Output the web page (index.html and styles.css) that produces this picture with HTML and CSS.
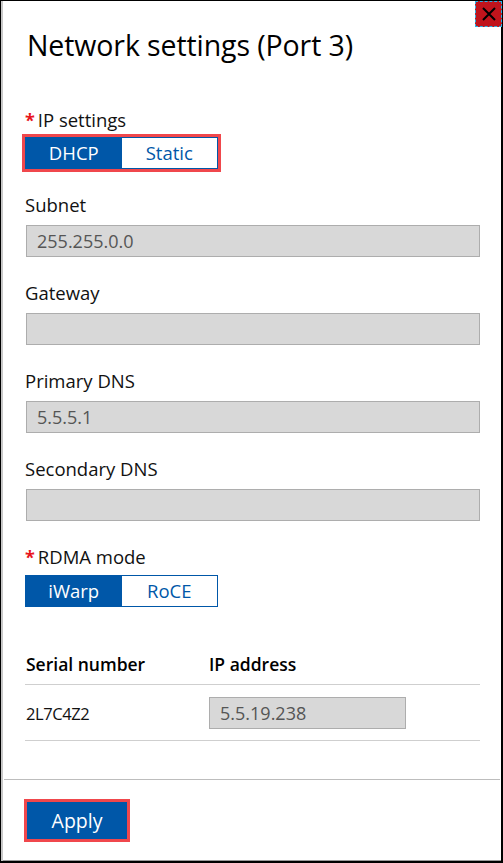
FILE: index.html
```html
<!DOCTYPE html>
<html lang="en">
<head>
<meta charset="utf-8">
<title>Network settings (Port 3)</title>
<link rel="stylesheet" href="styles.css">
</head>
<body>
<div class="window">
  <button class="close" aria-label="Close">
    <svg width="14" height="14" viewBox="0 0 14 14"><path d="M1 1 L13 13 M13 1 L1 13" stroke="#000" stroke-width="2" fill="none"/></svg>
  </button>
  <div class="content">
    <h1 class="title">Network settings (Port 3)</h1>

    <div class="label label-first"><span class="req">*</span>IP settings</div>
    <div class="seg seg-hl">
      <span class="seg-btn on">DHCP</span><span class="seg-btn">Static</span>
    </div>

    <div class="label">Subnet</div>
    <div class="input">255.255.0.0</div>

    <div class="label">Gateway</div>
    <div class="input"></div>

    <div class="label">Primary DNS</div>
    <div class="input">5.5.5.1</div>

    <div class="label">Secondary DNS</div>
    <div class="input"></div>

    <div class="label"><span class="req">*</span>RDMA mode</div>
    <div class="seg">
      <span class="seg-btn on">iWarp</span><span class="seg-btn">RoCE</span>
    </div>

    <div class="table">
      <div class="trow thead">
        <div class="c1">Serial number</div>
        <div class="c2">IP address</div>
      </div>
      <div class="trow tbody">
        <div class="c1 serial">2L7C4Z2</div>
        <div class="c2"><div class="input small">5.5.19.238</div></div>
      </div>
    </div>
  </div>
  <div class="footer">
    <button class="apply">Apply</button>
  </div>
</div>
</body>
</html>
```
FILE: styles.css
```css
* { box-sizing: border-box; }
html, body { margin: 0; padding: 0; background: #fff; }
body {
  font-family: "Open Sans", "Noto Sans", sans-serif;
  color: #111;
}
.window {
  position: relative;
  width: 503px;
  height: 863px;
  border-top: 1px solid #000;
  border-left: 1px solid #000;
  border-right: 2px solid #000;
  border-bottom: 2px solid #000;
  box-shadow: inset 2px 0 0 #c8c8c8, inset 0 -1px 0 #9a9a9a;
  display: flex;
  flex-direction: column;
}
.close {
  position: absolute;
  top: 0;
  right: -1px;
  width: 27px;
  height: 26px;
  background: #c0141c;
  border: 1px dashed #2ab3e6;
  padding: 0;
  display: flex;
  align-items: center;
  justify-content: center;
}
.content {
  padding: 0 21px 0 24px;
  flex: 1;
}
.title {
  margin: 26px 0 0 2px;
  font-size: 28.5px;
  font-weight: 400;
  line-height: 36px;
  color: #000;
  letter-spacing: -0.1px;
}
.label {
  font-size: 18.5px;
  line-height: 24px;
  margin-top: 24px;
  color: #111;
}
.label-first { margin-top: 45px; }
.req { color: #e8141c; font-weight: 700; font-size: 18px; margin: 0 3px 0 0; }
.seg {
  display: flex;
  width: 193px;
  margin-top: 6px;
  border: 1px solid #0057a8;
}
.seg-hl { outline: 3px solid #f0474c; margin-top: 5px; }
.seg-btn {
  flex: 1;
  height: 30px;
  line-height: 30px;
  text-align: center;
  font-size: 18.5px;
  color: #0057a8;
  background: #fff;
}
.seg-btn.on { background: #0057a8; color: #fff; }
.input {
  margin-top: 8px;
  margin-left: 1px;
  height: 32px;
  background: #d8d8d8;
  border: 1px solid #adadad;
  padding: 0 10px;
  font-size: 18px;
  line-height: 30px;
  color: #555;
}
.table { margin-top: 45px; }
.trow {
  display: flex;
  border-bottom: 1px solid #cfcfcf;
  font-size: 17.5px;
}
.thead { font-weight: 600; height: 33px; line-height: 24px; color: #000; }
.tbody { height: 56px; align-items: center; padding-top: 1px; }
.c1 { width: 184px; padding-left: 1px; }
.serial { font-size: 16.5px; letter-spacing: -0.4px; }
.c2 { flex: 1; }
.input.small { margin: 0; width: 197px; }
.footer {
  border-top: 1px solid #bdbdbd;
  margin: 0 1px 0 3px;
  height: 82px;
  padding: 22px 0 0 23px;
}
.apply {
  width: 100px;
  height: 37px;
  background: #0057a8;
  color: #fff;
  border: none;
  outline: 3px solid #f0474c;
  font-family: inherit;
  font-size: 19.5px;
  padding: 0;
}
```
